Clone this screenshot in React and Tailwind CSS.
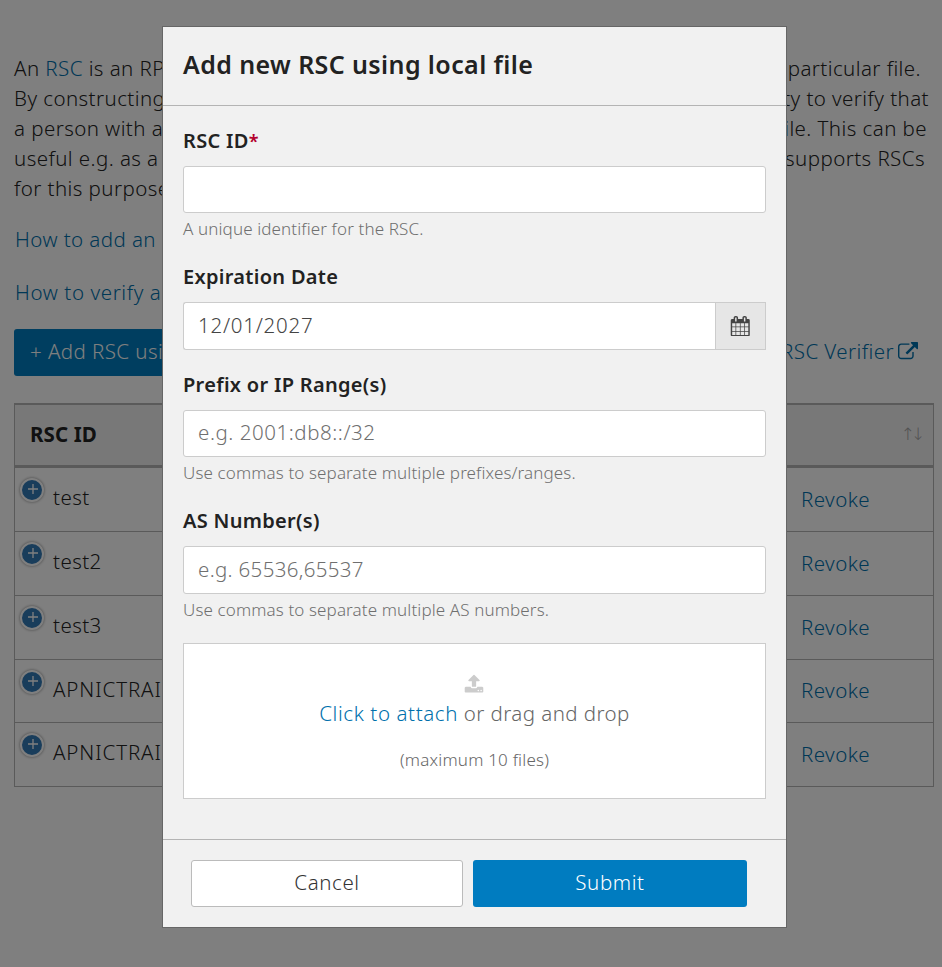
import React, { useState } from 'react';

const rows = [
  { id: 'test', height: 'h-[64px]', line: 'leading-[63px]' },
  { id: 'test2', height: 'h-[64px]', line: 'leading-[63px]' },
  { id: 'test3', height: 'h-[64px]', line: 'leading-[63px]' },
  { id: 'APNICTRAIN', height: 'h-[63px]', line: 'leading-[61px]', tracking: 'tracking-[0.9px]' },
  { id: 'APNICTRAIN', height: 'h-[64px]', line: 'leading-[63px]', tracking: 'tracking-[0.9px]' },
];

const introLines = [
  { end: 'particular file.', className: 'pr-[13px]' },
  { start: 'By constructing', end: 'ty to verify that', className: 'pr-[5px]' },
  { start: 'a person with a', end: 'file. This can be', className: 'pr-[7px]' },
  { start: 'useful e.g. as a', end: 'supports RSCs', className: 'pr-[9px]' },
  { start: 'for this purpose', end: '', className: '' },
];

function CalendarIcon() {
  return (
    <svg className="w-[20.5px] h-[20.5px]" viewBox="0 0 1792 1792" fill="currentColor">
      <path d="M192 1664h288v-288h-288v288zm352 0h320v-288h-320v288zm-352-352h288v-320h-288v320zm352 0h320v-320h-320v320zm-352-384h288v-288h-288v288zm736 736h320v-288h-320v288zm-384-736h320v-288h-320v288zm768 736h288v-288h-288v288zm-384-352h320v-320h-320v320zm-352-864v-288q0-13-9.5-22.5t-22.5-9.5h-64q-13 0-22.5 9.5t-9.5 22.5v288q0 13 9.5 22.5t22.5 9.5h64q13 0 22.5-9.5t9.5-22.5zm736 864h288v-320h-288v320zm-384-384h320v-288h-320v288zm384 0h288v-288h-288v288zm32-480v-288q0-13-9.5-22.5t-22.5-9.5h-64q-13 0-22.5 9.5t-9.5 22.5v288q0 13 9.5 22.5t22.5 9.5h64q13 0 22.5-9.5t9.5-22.5zm384-64v1280q0 52-38 90t-90 38h-1408q-52 0-90-38t-38-90v-1280q0-52 38-90t90-38h128v-96q0-66 47-113t113-47h64q66 0 113 47t47 113v96h384v-96q0-66 47-113t113-47h64q66 0 113 47t47 113v96h128q52 0 90 38t38 90z" />
    </svg>
  );
}

function UploadIcon() {
  return (
    <svg className="w-5 h-5" viewBox="0 0 1792 1792" fill="currentColor">
      <path d="M1344 1472q0-26-19-45t-45-19-45 19-19 45 19 45 45 19 45-19 19-45zm256 0q0-26-19-45t-45-19-45 19-19 45 19 45 45 19 45-19 19-45zm128-224v320q0 40-28 68t-68 28h-1472q-40 0-68-28t-28-68v-320q0-40 28-68t68-28h427q21 56 70.5 92t110.5 36h256q61 0 110.5-36t70.5-92h427q40 0 68 28t28 68zm-325-648q-17 40-59 40h-256v448q0 26-19 45t-45 19h-256q-26 0-45-19t-19-45v-448h-256q-42 0-59-40-17-39 14-69l448-448q18-19 45-19t45 19l448 448q31 30 14 69z" />
    </svg>
  );
}

function ExternalLinkIcon() {
  return (
    <svg className="w-[20px] h-[20px]" viewBox="0 0 1792 1792" fill="currentColor">
      <path d="M1408 928v320q0 119-84.5 203.5t-203.5 84.5h-832q-119 0-203.5-84.5t-84.5-203.5v-832q0-119 84.5-203.5t203.5-84.5h704q14 0 23 9t9 23v64q0 14-9 23t-23 9h-704q-66 0-113 47t-47 113v832q0 66 47 113t113 47h832q66 0 113-47t47-113v-320q0-14 9-23t23-9h64q14 0 23 9t9 23zm384-864v512q0 26-19 45t-45 19-45-19l-176-176-652 652q-10 10-23 10t-23-10l-114-114q-10-10-10-23t10-23l652-652-176-176q-19-19-19-45t19-45 45-19h512q26 0 45 19t19 45z" />
    </svg>
  );
}

function PlusBadge() {
  return (
    <span className="w-6 h-6 mt-[10px] shrink-0 rounded-full bg-[#337ab7] border-2 border-white shadow-[0_0_3px_#888] flex items-center justify-center text-white">
      <svg className="w-3 h-3 -mt-[3px] ml-px" viewBox="0 0 12 12" stroke="currentColor" strokeWidth="1.3" fill="none">
        <path d="M6 1v10M1 6h10" />
      </svg>
    </span>
  );
}

function RscPage() {
  return (
    <div className="h-[967px] pl-[14px] pr-2 pt-[53px] text-[#222]">
      {introLines.map((line, index) => (
        <div key={index} className={`h-[30px] leading-[30px] flex justify-between whitespace-nowrap ${line.className}`}>
          {line.start ? <span>{line.start}</span> : <span>An <a className="text-[#0070ac]">RSC</a> is an RPKI</span>}
          <span>{line.end}</span>
        </div>
      ))}
      <a className="block pl-px mt-[21px] h-[30px] leading-[30px] text-[#0070ac]">How to add an</a>
      <a className="block pl-px mt-[23px] h-[30px] leading-[30px] tracking-[0.6px] text-[#0070ac]">How to verify a</a>

      <div className="mt-[22px] pr-4 flex justify-between items-center">
        <button className="h-[47px] w-[260px] pl-4 pb-[2px] rounded-[3px] bg-[#007cc0] text-white text-left">+ Add RSC using local file</button>
        <a className="mb-[2px] flex items-center gap-[4px] text-[#0070ac]">RSC Verifier <ExternalLinkIcon /></a>
      </div>

      <div className="mt-[27px] border-x border-t-2 border-[#b4b4b4]">
        <div className="h-[63px] px-[15px] flex items-center justify-between bg-[#f1f1f1] border-b-3 border-[#b4b4b4]">
          <span className="mb-[2px] font-bold tracking-[0.1px]">RSC ID</span>
          <span className="-mr-[5px] text-[#a4a4a4] text-[17px] tracking-[-4px] pr-[2px] font-['DejaVu_Sans',sans-serif]">↑↓</span>
        </div>
        {rows.map((row, index) => (
          <div key={index} className={`${row.height} pl-[5px] pr-[63px] flex justify-between border-b border-[#b4b4b4]`}>
            <div className="flex">
              <PlusBadge />
              <span className={`ml-[9px] leading-[58px] ${row.tracking || ''}`}>{row.id}</span>
            </div>
            <a className={`${row.line} text-[#0070ac]`}>Revoke</a>
          </div>
        ))}
      </div>
    </div>
  );
}

function Label({ children }) {
  return <label className="block h-6 leading-6 font-semibold text-[20px] tracking-[0.3px] text-[#222]">{children}</label>;
}

function Help({ children }) {
  return <p className="mt-[6px] h-5 leading-5 text-[17px] tracking-[0.12px] text-[#6f6f6f]">{children}</p>;
}

const inputClass = 'block w-full pl-[14px] rounded-[3px] border border-[#ccc] bg-white text-[#444] placeholder-[#6f6f6f] outline-none';

export default function App() {
  const [date, setDate] = useState('12/01/2027');

  return (
    <div className="relative overflow-hidden bg-white font-['Noto_Sans',sans-serif] font-light text-[20.5px] tracking-[0.43px]">
      <RscPage />

      <div className="absolute inset-0 bg-black/50 pt-[26px] pl-[162px]">
        <div className="w-[625px] h-[902px] bg-[#f1f1f1] border border-[#666] bg-clip-padding">
          <div className="h-[79px] px-5 border-b border-[#b4b4b4]">
            <h2 className="leading-[74px] text-[25px] font-semibold tracking-[0.4px] text-[#222]">Add new RSC using local file</h2>
          </div>

          <div className="h-[733px] px-5 pt-[23px]">
            <Label>RSC ID<span className="text-[18px] text-[#b3002d]">*</span></Label>
            <input className={`${inputClass} mt-[13px] h-[47px]`} />
            <Help>A unique identifier for the RSC.</Help>

            <div className="mt-[26px]">
              <Label>Expiration Date</Label>
            </div>
            <div className="mt-[13px] h-[48px] flex">
              <input
                value={date}
                onChange={(e) => setDate(e.target.value)}
                className={`${inputClass} pb-[2px] rounded-r-none border-r-0 tracking-[0.75px]`}
              />
              <button className="w-[51px] shrink-0 border border-[#ccc] bg-[#e6e6e6] text-[#444] flex items-center justify-center">
                <CalendarIcon />
              </button>
            </div>

            <div className="mt-[23px]">
              <Label>Prefix or IP Range(s)</Label>
            </div>
            <input placeholder="e.g. 2001:db8::/32" className={`${inputClass} pb-[3px] mt-[13px] h-[47px] tracking-[0.56px]`} />
            <Help>Use commas to separate multiple prefixes/ranges.</Help>

            <div className="mt-[26px]">
              <Label>AS Number(s)</Label>
            </div>
            <input placeholder="e.g. 65536,65537" className={`${inputClass} pb-[2px] mt-[13px] h-[48px] tracking-[0.33px]`} />
            <Help>Use commas to separate multiple AS numbers.</Help>

            <div className="mt-[23px] h-[156px] pt-[30px] border border-[#ccc] bg-white flex flex-col items-center text-[#666]">
              <span className="pr-px text-[#ccc]"><UploadIcon /></span>
              <p className="mt-1 leading-[30px]"><a className="tracking-[0.6px] text-[#0070ac]">Click to attach</a> or drag and drop</p>
              <p className="mt-[22px] leading-5 text-[17px] tracking-[0.2px]">(maximum 10 files)</p>
            </div>
          </div>

          <div className="h-[88px] pl-7 pt-5 border-t border-[#b4b4b4] flex items-start gap-[10px]">
            <button className="w-[272px] h-[47px] pb-[2px] rounded-[3px] border border-[#bbb] bg-white text-[#333] tracking-[0.6px]">Cancel</button>
            <button className="w-[274px] h-[47px] pb-[2px] rounded-[3px] bg-[#007cc0] text-white tracking-[0.6px]">Submit</button>
          </div>
        </div>
      </div>
    </div>
  );
}
